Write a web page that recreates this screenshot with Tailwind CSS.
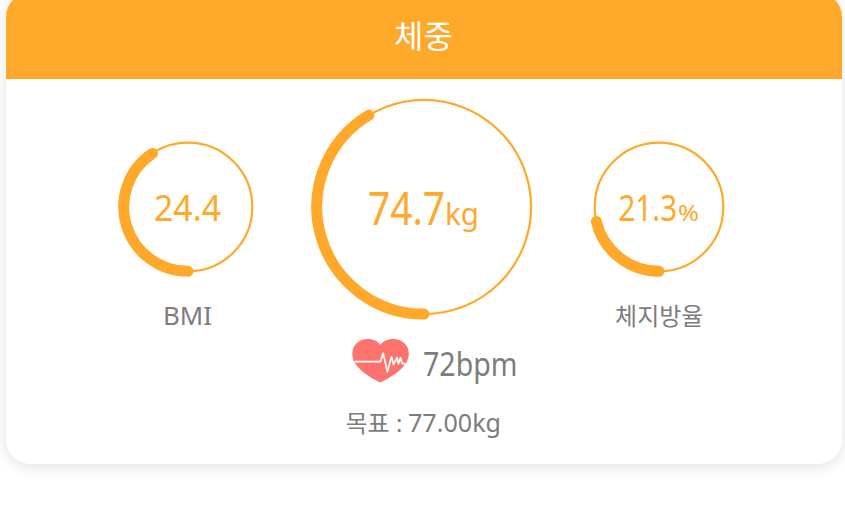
<!DOCTYPE html>
<html lang="ko">
<head>
<meta charset="utf-8">
<title>체중</title>
<script src="https://cdn.jsdelivr.net/npm/@tailwindcss/browser@4"></script>
</head>
<body class="h-[505px] overflow-hidden bg-white font-['Noto_Sans','Noto_Sans_CJK_KR',sans-serif] text-[#7d7d7d]">
<main class="-mt-[7px] ml-[5.5px] h-[471px] w-[836px] overflow-hidden rounded-[24px] bg-white shadow-[0_3px_14px_rgba(0,0,0,0.12)]">
  <header class="flex h-[85.5px] items-center justify-center bg-[#ffa829] pt-px">
    <h1 class="text-[32px] leading-none text-white">체중</h1>
  </header>
  <section class="flex h-[250px] items-start pl-[112.5px]">
    <div class="flex w-[140px] flex-col items-center pt-[58.6px]">
      <svg class="block h-[140px] w-[140px]" viewBox="0 0 140 140" fill="none" stroke="#ffa829">
        <circle cx="70" cy="70" r="64.3" stroke-width="2.2"/>
        <path d="M70 134.3A64.3 64.3 0 0 1 34.5 16.4" stroke-width="11" stroke-linecap="round"/>
        <text x="36" y="83.6" font-size="36" textLength="67" lengthAdjust="spacingAndGlyphs" fill="#ffa829" stroke="none">24.4</text>
      </svg>
      <svg class="mt-[17px] block h-10 w-[140px]" viewBox="0 0 140 40"><text x="45" y="31" font-size="26" textLength="49" lengthAdjust="spacingAndGlyphs" fill="#7d7d7d">BMI</text></svg>
    </div>
    <svg class="mt-[16.6px] ml-[53.6px] block h-[224px] w-[224px] overflow-visible" viewBox="0 0 224 224" fill="none" stroke="#ffa829">
      <circle cx="112" cy="112" r="107.1" stroke-width="2.2"/>
      <path d="M112 219.1A107.1 107.1 0 0 1 56.9 20.1" stroke-width="11" stroke-linecap="round"/>
      <g fill="#ffa829" stroke="none">
        <text x="56" y="130.2" font-size="45" textLength="77" lengthAdjust="spacingAndGlyphs">74.7</text>
        <text x="133" y="129.8" font-size="31" textLength="34" lengthAdjust="spacingAndGlyphs">kg</text>
      </g>
    </svg>
    <div class="ml-[53.7px] flex w-[140px] flex-col items-center pt-[58.6px]">
      <svg class="block h-[140px] w-[140px]" viewBox="0 0 140 140" fill="none" stroke="#ffa829">
        <circle cx="70" cy="70" r="64.3" stroke-width="2.2"/>
        <path d="M70 134.3A64.3 64.3 0 0 1 7.4 84.5" stroke-width="11" stroke-linecap="round"/>
        <g fill="#ffa829" stroke="none">
          <text x="29.5" y="83.6" font-size="36" textLength="58.5" lengthAdjust="spacingAndGlyphs">21.3</text>
          <text x="89" y="83.6" font-size="22" textLength="21" lengthAdjust="spacingAndGlyphs">%</text>
        </g>
      </svg>
      <p class="mt-[27px] text-[24px] leading-none whitespace-nowrap">체지방율</p>
    </div>
  </section>
  <div class="flex h-[68px] items-start pt-[9px] pl-[345.3px]">
    <svg class="block h-[45px] w-[58px]" viewBox="0 0 58 45" fill="none">
      <path d="M29.3 6.8C25.7 2.5 21.7 1 16.8 1C7.8 1 1.3 7.2 1.3 15.7C1.3 28.2 15.3 37.4 29.3 44.6C43.3 37.4 57.8 28.2 57.8 15.7C57.8 7.2 51.3 1 42.3 1C37.2 1 32.9 2.5 29.3 6.8Z" fill="#ff736e"/>
      <path d="M4 23.6H29.3L32.2 15.2L36.4 33.8L40.5 18.8L42.6 26.4L46 19.6L47.4 25.8L49.5 19.8L51.2 25.6H54" stroke="white" stroke-width="1.7" stroke-linejoin="round"/>
    </svg>
    <svg class="ml-[13.7px] block h-[50px] w-[110px]" viewBox="0 0 110 50"><text x="1" y="37.6" font-size="32" textLength="94.5" lengthAdjust="spacingAndGlyphs" fill="#7d7d7d">72bpm</text></svg>
  </div>
  <div class="flex h-12 pt-1 pl-[340px]">
    <p class="mt-[10px] w-[62px] text-[24px] leading-none whitespace-nowrap">목표 :</p>
    <svg class="block h-11 w-[110px]" viewBox="0 0 110 44"><text x="0" y="31" font-size="26" textLength="93" lengthAdjust="spacingAndGlyphs" fill="#7d7d7d">77.00kg</text></svg>
  </div>
</main>
</body>
</html>
